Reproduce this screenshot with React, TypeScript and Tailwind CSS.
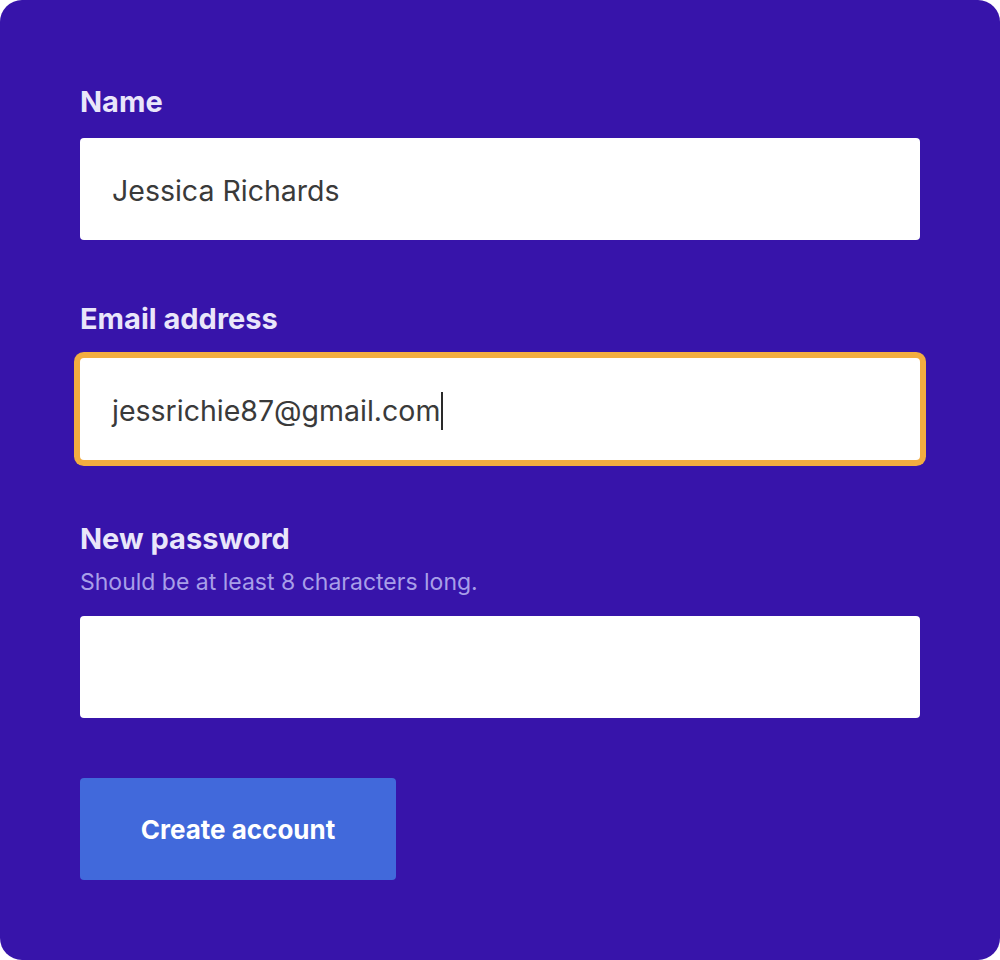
export default function App() {
  return (
    <div className="h-[960px] w-[1000px] bg-white font-['Inter','Noto_Sans',sans-serif]">
      <form className="h-full w-full rounded-[22px] bg-[#3714aa] px-20 pt-[84px]">
        <label className="block text-[29px] font-bold leading-[36px] text-[#e9e6fa]">Name</label>
        <div className="mt-[18px] flex h-[102px] items-center rounded bg-white px-8 pt-1 text-[28.5px] text-[#3a3a3a]">
          Jessica Richards
        </div>

        <label className="mt-[61px] block text-[29px] font-bold leading-[36px] text-[#e9e6fa]">Email address</label>
        <div className="mt-[21px] flex h-[102px] items-center rounded bg-white px-8 pt-1 text-[28.5px] text-[#3a3a3a] shadow-[0_0_0_6px_#f2ad40]">
          jessrichie87@gmail.com
          <span className="ml-px h-[38px] w-[2px] bg-[#2a2a2a]" />
        </div>

        <label className="mt-[61px] block text-[29px] font-bold leading-[36px] text-[#e9e6fa]">New password</label>
        <p className="mt-[11px] text-[23px] leading-[28px] text-[#a89fe8]">Should be at least 8 characters long.</p>
        <div className="mt-5 h-[102px] rounded bg-white" />

        <button
          type="button"
          className="mt-[60px] h-[102px] w-[316px] rounded bg-[#4169db] text-[26px] font-bold text-white"
        >
          Create account
        </button>
      </form>
    </div>
  );
}
